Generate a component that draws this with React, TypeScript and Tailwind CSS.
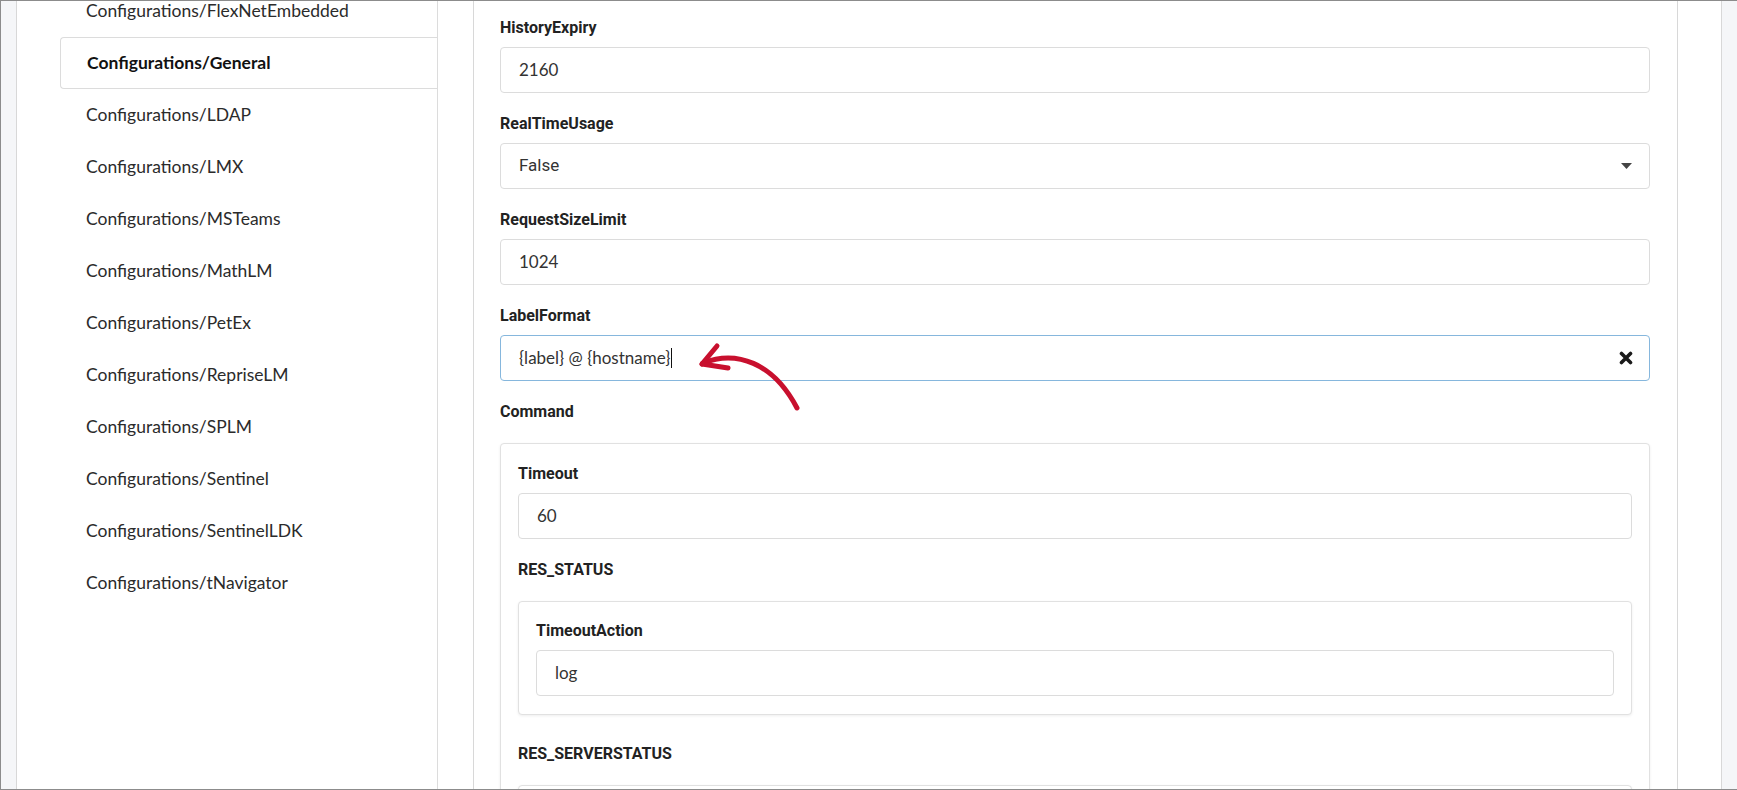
import React from "react";

/* ---------- Data ---------- */

const NAV_ITEMS = [
  "Configurations/FlexNetEmbedded",
  "Configurations/General",
  "Configurations/LDAP",
  "Configurations/LMX",
  "Configurations/MSTeams",
  "Configurations/MathLM",
  "Configurations/PetEx",
  "Configurations/RepriseLM",
  "Configurations/SPLM",
  "Configurations/Sentinel",
  "Configurations/SentinelLDK",
  "Configurations/tNavigator",
];

const ACTIVE = "Configurations/General";

/* ---------- Small pieces ---------- */

const Label: React.FC<{ children: React.ReactNode; group?: boolean }> = ({ children, group }) => (
  <div
    className={`font-['Roboto',sans-serif] font-bold text-[16px] leading-[22px] text-[#222] ${
      group ? "mb-5" : "mb-2"
    }`}
  >
    {children}
  </div>
);

const TextInput: React.FC<{ value: string }> = ({ value }) => (
  <div className="h-[46px] border border-[#dcdcdc] rounded-[4px] bg-white px-[18px] flex items-center font-['Lato',sans-serif] text-[17px] text-[#333]">
    {value}
  </div>
);

const SelectInput: React.FC<{ value: string }> = ({ value }) => (
  <div className="h-[46px] border border-[#dcdcdc] rounded-[4px] bg-white pl-[18px] pr-[17px] flex items-center justify-between font-['Roboto',sans-serif] text-[17px] text-[#333]">
    <span>{value}</span>
    <svg width="11" height="6" viewBox="0 0 11 6" className="text-[#444]">
      <path d="M0 0 H11 L5.5 6 Z" fill="currentColor" />
    </svg>
  </div>
);

/* Focused input with caret + clear button */
const FocusedInput: React.FC<{ value: string }> = ({ value }) => (
  <div className="h-[46px] border border-[#86b7dd] rounded-[4px] bg-white pl-[18px] pr-[16px] flex items-center justify-between font-['Lato',sans-serif] text-[17px] text-[#333]">
    <span className="flex items-center">
      {value}
      <span className="inline-block w-px h-[20px] bg-[#111] ml-px" />
    </span>
    <svg width="14" height="14" viewBox="0 0 14 14">
      <path d="M2.5 2.5 L11.5 11.5 M11.5 2.5 L2.5 11.5" stroke="#1a1a1a" strokeWidth="3.6" strokeLinecap="round" />
    </svg>
  </div>
);

const Box: React.FC<{ children?: React.ReactNode; className?: string }> = ({ children, className = "" }) => (
  <div
    className={`border border-[#e1e1e1] rounded-[4px] bg-white shadow-[0_1px_3px_rgba(0,0,0,0.07)] ${className}`}
  >
    {children}
  </div>
);

/* ---------- Page ---------- */

export default function App() {
  return (
    <div className="w-[1737px] h-[790px] overflow-hidden bg-[#f5f6f8] border-l border-t border-b border-[#8c8c8c] flex">
      {/* left gutter */}
      <div className="w-[15px] shrink-0" />

      {/* main white container */}
      <div className="w-[1706px] shrink-0 bg-white border-x border-[#d8d8d8] flex">
        {/* sidebar */}
        <div className="ml-[43px] w-[378px] shrink-0 border-r border-[#dcdcdc]">
          <div className="-mt-[16px]">
            {NAV_ITEMS.map((item) => {
              const active = item === ACTIVE;
              return (
                <div
                  key={item}
                  className={`h-[52px] flex items-center pl-[26px] font-['Lato',sans-serif] text-[17.5px] ${
                    active
                      ? "border-l border-y border-[#dcdcdc] rounded-l-[4px] font-bold text-[#111]"
                      : "text-[#2b2b2b]"
                  }`}
                >
                  {item}
                </div>
              );
            })}
          </div>
        </div>

        {/* content panel */}
        <div className="relative ml-[35px] w-[1205px] shrink-0 border-x border-[#d8d8d8] pl-[26px] pr-[27px] pt-[16px]">
          <div className="mb-5">
            <Label>HistoryExpiry</Label>
            <TextInput value="2160" />
          </div>
          <div className="mb-5">
            <Label>RealTimeUsage</Label>
            <SelectInput value="False" />
          </div>
          <div className="mb-5">
            <Label>RequestSizeLimit</Label>
            <TextInput value="1024" />
          </div>
          <div className="mb-5">
            <Label>LabelFormat</Label>
            <FocusedInput value="{label} @ {hostname}" />
          </div>

          <Label group>Command</Label>
          <Box className="pt-[19px] px-[17px] pb-[18px]">
            <div className="mb-5">
              <Label>Timeout</Label>
              <TextInput value="60" />
            </div>

            <Label group>RES_STATUS</Label>
            <Box className="pt-[18px] px-[17px] pb-[18px] mb-[28px]">
              <Label>TimeoutAction</Label>
              <TextInput value="log" />
            </Box>

            <Label group>RES_SERVERSTATUS</Label>
            <Box className="h-[120px]" />
          </Box>

          {/* hand-drawn annotation arrow */}
          <svg
            className="absolute left-0 top-0 pointer-events-none"
            width="400"
            height="460"
            viewBox="473 -1 400 460"
          >
            <g stroke="#c8102e" strokeWidth="5" strokeLinecap="round" fill="none">
              <path d="M702 361 C 735 348, 772 360, 796 406" />
              <path d="M701 362 L 716 344" />
              <path d="M701 362 L 727 366" />
            </g>
          </svg>
        </div>
      </div>
    </div>
  );
}
